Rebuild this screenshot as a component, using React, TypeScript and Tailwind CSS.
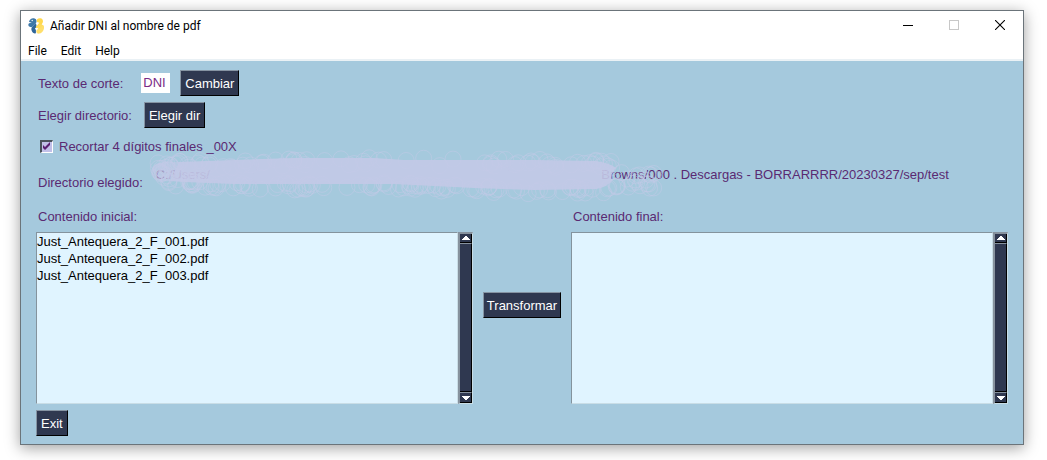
import { useState } from "react";
import type { ReactNode } from "react";

const files = [
  "Just_Antequera_2_F_001.pdf",
  "Just_Antequera_2_F_002.pdf",
  "Just_Antequera_2_F_003.pdf",
];

function PythonLogo() {
  return (
    <svg viewBox="0 0 16 16" className="h-4 w-4" aria-hidden="true">
      <path
        d="M2.600 1.300C4-.2 7.300 0 8.200 1.800c.7 1.600.2 3.200-1 4.400L4.700 8.500c-1 .9-1.800.7-2.900.3C0 8-.1 6 1.100 5.200l2.800-.6-2.800-.5C1 3 1.700 2 2.600 1.300Z"
        fill="#3d78a8"
      />
      <path
        d="M7.800 5.400 4 9.200c-1.100 1.300-.7 2.900.2 4.600 1 1.700 2.900 2.200 3.700 1.200V12l-1-1.400c1.700-1 2.200-3 .9-5.200Z"
        fill="#2f669a"
      />
      <path
        d="M9.200 1.200C10.600-.2 13.700 0 14.600 1.700c.8 1.700.2 3.300-.8 4.400L10 9.700c-1.100.9-2 .2-2.200-.7l3.500-4.200-2.200-.7c-.5-1-.4-2.100.1-2.900Z"
        fill="#ffd94f"
      />
      <path
        d="M14.700 6.800c1.600.9 1.600 2.800 1 4.600-.7 2.100-2.400 3.900-4.500 4.200-1.700.3-3-.8-2.900-2.300.1-1.400 1.600-2.200 3.200-3.300 1.400-1 2.400-1.900 3.200-3.200Z"
        fill="#ffdf6b"
      />
      <path d="M13 5.500 9 9.500l2 2 4-4Z" fill="#ffdc5c" />
      <circle cx="4.200" cy="2.500" r=".7" fill="#fff" />
    </svg>
  );
}

function TkButton({ children }: { children: ReactNode }) {
  return (
    <button
      type="button"
      className="flex h-[26px] w-full items-center justify-center whitespace-nowrap border border-t-[#8694a3] border-r-black border-b-black border-l-[#8694a3] bg-[#2f3850] px-1 pt-[2px] text-[13px] leading-5 text-white"
    >
      {children}
    </button>
  );
}

function ScrollBar() {
  return (
    <div className="flex w-[15px] flex-col border-t-2 border-r border-b border-l-2 border-t-[#87929e] border-r-[#c9dde6] border-b-[#c9dde6] border-l-[#87929e] bg-[#2f3850]">
      <button
        type="button"
        aria-label="Subir"
        className="flex h-[9px] items-center justify-center border-r border-b border-black"
      >
        <svg viewBox="0 0 8 4" className="h-1 w-2" shapeRendering="crispEdges">
          <path d="M3 0h2v1h1v1h1v1h1v1H0V3h1V2h1V1h1Z" fill="#fff" />
        </svg>
      </button>
      <div className="flex-1 border-t border-r border-b border-t-[#87929e] border-r-black border-b-black" />
      <button
        type="button"
        aria-label="Bajar"
        className="flex h-[11px] items-center justify-center border-t border-r border-b border-t-[#87929e] border-r-black border-b-black"
      >
        <svg viewBox="0 0 8 4" className="h-1 w-2" shapeRendering="crispEdges">
          <path d="M0 0h8v1H7v1H6v1H5v1H3V3H2V2H1V1H0Z" fill="#fff" />
        </svg>
      </button>
    </div>
  );
}

function FileList({ items, label }: { items: string[]; label: string }) {
  return (
    <div className="flex h-[172px] min-w-0">
      <ul
        aria-label={label}
        className="min-w-0 flex-1 overflow-hidden border border-t-[#84939d] border-r-[#c9dde6] border-b-[#c9dde6] border-l-[#84939d] bg-[#e0f4ff] text-[13px] leading-[17px] text-black"
      >
        {items.map((item) => (
          <li key={item}>{item}</li>
        ))}
      </ul>
      <ScrollBar />
    </div>
  );
}

/* Upper and lower limits of the marker stroke at some points along its length. */
const band = [
  [12, 16, 28],
  [30, 14, 34],
  [80, 13, 37],
  [150, 11, 38],
  [230, 10, 37],
  [270, 11, 38],
  [320, 12, 40],
  [390, 12, 42],
  [460, 13, 42],
  [510, 18, 32],
];

function limits(x: number) {
  for (let i = 1; i < band.length; i++) {
    const [x0, a0, b0] = band[i - 1];
    const [x1, a1, b1] = band[i];
    if (x <= x1) {
      const t = Math.max(0, (x - x0) / (x1 - x0));
      return [a0 + (a1 - a0) * t, b0 + (b1 - b0) * t];
    }
  }
  return [18, 32];
}

function random(seed: number) {
  let s = seed;
  return () => {
    s = (s * 16807) % 2147483647;
    return s / 2147483647;
  };
}

function makeRings() {
  const next = random(41);
  const edge = Array.from({ length: 190 }, () => {
    const x = 14 + next() * 460;
    const [a, b] = limits(x);
    const lower = next() > 0.4;
    const y = lower ? b - 3 + next() * 7 : a + 7 - next() * 8;
    return { x, y };
  });
  const tail = Array.from({ length: 18 }, () => ({
    x: 472 + next() * 38,
    y: 22 + next() * 20,
  }));
  const head = Array.from({ length: 10 }, () => ({
    x: 13 + next() * 14,
    y: 20 + next() * 8,
  }));
  return [...edge, ...tail, ...head];
}

const rings = makeRings();

function Scribble() {
  return (
    <svg
      viewBox="0 0 520 56"
      className="pointer-events-none absolute -top-4 -left-3 h-14 w-[520px]"
      aria-hidden="true"
    >
      <path
        d="M10 18Q16 13 35 14L26 33Q16 34 12 29 7 23 10 18Z"
        fill="#c3c9e7"
        fillOpacity=".6"
      />
      <path
        d="M35 14L90 12 150 10 230 10 260 12 320 12 390 12 452 13Q466 15 472 20 466 26 468 32 464 39 452 41L390 42 330 40 250 36 150 36 90 36 40 34 26 33Z"
        fill="#c3c9e7"
        fillOpacity=".9"
      />
      {rings.map((r, i) => (
        <circle
          key={i}
          cx={r.x}
          cy={r.y}
          r="8"
          fill="none"
          stroke="#c3c9e7"
          strokeOpacity=".5"
          strokeWidth="1"
        />
      ))}
    </svg>
  );
}

export default function App() {
  const [cut, setCut] = useState("DNI");
  const [trim, setTrim] = useState(true);

  return (
    <div className="bg-white pt-[10px] pr-[23px] pb-[15px] pl-5 font-['Liberation_Sans',Arial,sans-serif]">
      <div className="border border-[#6b747a] bg-white shadow-[0_3px_14px_rgba(0,0,0,0.38)]">
        <header className="flex h-[30px] items-start font-['Roboto','Noto_Sans',sans-serif] text-black">
          <div className="flex h-[30px] flex-1 items-center gap-[6px] pl-[7px]">
            <PythonLogo />
            <h1 className="text-[12px] leading-4">Añadir DNI al nombre de pdf</h1>
          </div>
          <button type="button" aria-label="Minimizar" className="flex h-7 w-[46px] items-center justify-center">
            <svg viewBox="0 0 10 10" className="h-[10px] w-[10px]" shapeRendering="crispEdges">
              <path d="M0 5h10v1H0Z" fill="#000" />
            </svg>
          </button>
          <button type="button" disabled aria-label="Maximizar" className="flex h-7 w-[46px] items-center justify-center">
            <svg viewBox="0 0 10 10" className="h-[10px] w-[10px]">
              <rect x=".5" y=".5" width="9" height="9" fill="none" stroke="#c8c8c8" />
            </svg>
          </button>
          <button type="button" aria-label="Cerrar" className="flex h-7 w-[46px] items-center justify-center">
            <svg viewBox="0 0 10 10" className="h-[10px] w-[10px]">
              <path d="M0 0 10 10M10 0 0 10" stroke="#000" strokeWidth="1.100" />
            </svg>
          </button>
        </header>
        <nav className="flex h-5 items-center gap-[14px] border-b-2 border-[#eaf1f5] pt-[2px] pl-[7px] font-['Roboto','Noto_Sans',sans-serif] text-[12px] leading-4 text-black">
          <button type="button">File</button>
          <button type="button">Edit</button>
          <button type="button">Help</button>
        </nav>

        <main className="flex flex-col gap-[6px] bg-[#a5c9dd] px-[15px] pt-[9px] pb-2 text-[13px] leading-5 text-[#5a2a72]">
          <div className="flex items-center gap-[10px]">
            <label htmlFor="cut" className="mr-2 pt-[2px] pl-[2px]">
              Texto de corte:
            </label>
            <input
              id="cut"
              value={cut}
              onChange={(e) => setCut(e.target.value)}
              className="h-5 w-[29px] bg-white px-[2px] text-[13px] leading-5 text-[#7a2a86] outline-none"
            />
            <div>
              <TkButton>Cambiar</TkButton>
            </div>
          </div>
          <div className="flex items-center gap-3">
            <span className="pt-[2px] pl-[2px]">Elegir directorio:</span>
            <div>
              <TkButton>Elegir dir</TkButton>
            </div>
          </div>
          <label className="flex h-6 items-center gap-[6px] pl-1">
            <span className="grid h-[13px] w-[13px]">
              <input
                type="checkbox"
                checked={trim}
                onChange={(e) => setTrim(e.target.checked)}
                className="peer col-start-1 row-start-1 h-[13px] w-[13px] appearance-none border-t-2 border-r border-b border-l-2 border-t-[#4a525c] border-r-white border-b-white border-l-[#4a525c] bg-[#c1bfe8]"
              />
              <svg
                viewBox="0 0 13 13"
                className="pointer-events-none invisible col-start-1 row-start-1 h-[13px] w-[13px] peer-checked:visible"
              >
                <path d="M3 5v3l2 2 5-5V2L5 7Z" fill="#5a1f72" />
              </svg>
            </span>
            <span className="pt-[2px]">Recortar 4 dígitos finales _00X</span>
          </label>
          <div className="flex h-9 items-start gap-[14px]">
            <span className="self-center pt-[2px] pl-[2px]">Directorio elegido:</span>
            <div className="relative -ml-px flex w-[793px] justify-between whitespace-nowrap pt-px">
              <span>C:/Users/</span>
              <span>Browns/000 . Descargas - BORRARRRR/20230327/sep/test</span>
              <Scribble />
            </div>
          </div>

          <div className="grid grid-cols-[minmax(0,1fr)_78px_minmax(0,1fr)] items-center gap-x-[10px] gap-y-[5px]">
            <h2 className="pt-px pl-[2px]">Contenido inicial:</h2>
            <h2 className="col-start-3 pt-px pl-[2px]">Contenido final:</h2>
            <FileList items={files} label="Contenido inicial" />
            <div className="pb-[26px]">
              <TkButton>Transformar</TkButton>
            </div>
            <FileList items={[]} label="Contenido final" />
          </div>
          <div className="flex">
            <div>
              <TkButton>Exit</TkButton>
            </div>
          </div>
        </main>
      </div>
    </div>
  );
}
